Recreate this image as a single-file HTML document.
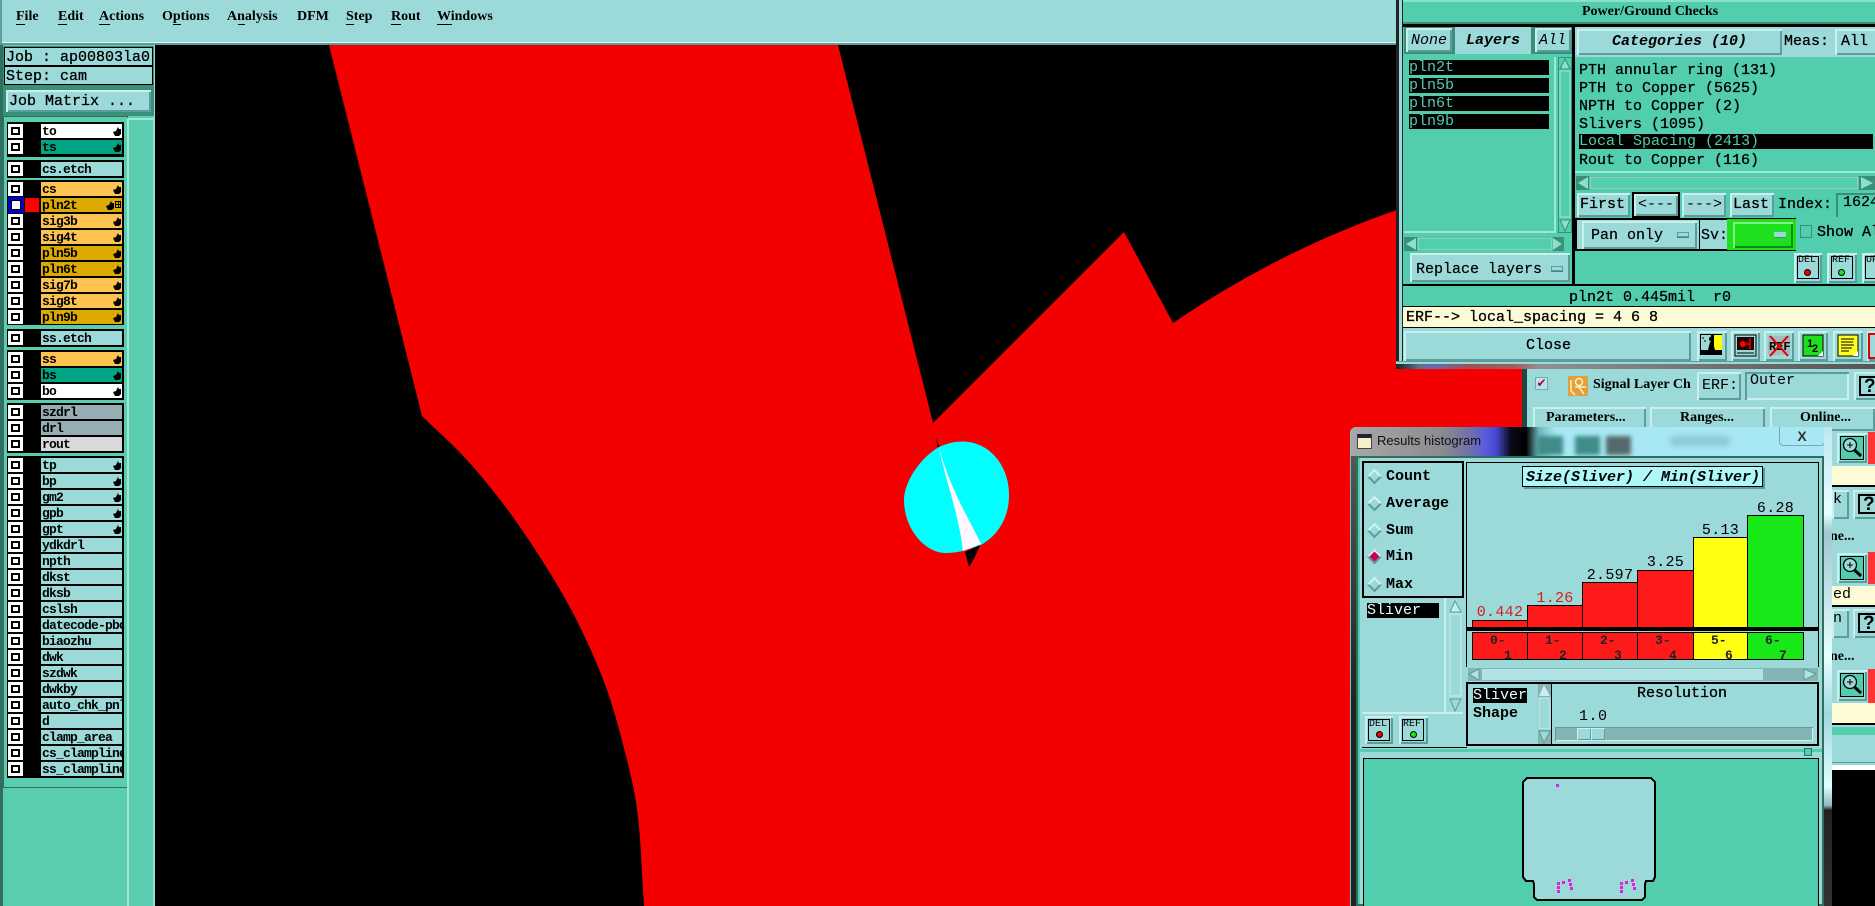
<!DOCTYPE html>
<html><head><meta charset="utf-8"><title>Genesis</title>
<style>
html,body{margin:0;padding:0;width:1875px;height:906px;overflow:hidden;background:#000}
*,*:after{box-sizing:border-box}
div,span{position:absolute}
.m{font:15px/16px "Liberation Mono",monospace;white-space:pre;color:#000}
.mb{font:bold 15px/16px "Liberation Mono",monospace;white-space:pre;color:#000}
.s{font:bold 14px/16px "Liberation Serif",serif;white-space:pre;color:#000}
.b{background:#9cd9d9;box-shadow:inset 2px 2px 0 #c9f0ee,inset -2px -2px 0 #5c9c9b}
.g{background:#000}
.r{left:8px;width:114px;height:14px}
.c{left:0;top:0;width:15px;height:14px;background:#fff}
.c:after{content:"";position:absolute;left:3px;top:3px;width:9px;height:8px;border:2px solid #000;background:#fff}
.l{left:33px;top:0;width:81px;height:14px;font:bold 13px/15px "Liberation Mono",monospace;letter-spacing:-.8px;color:#000;overflow:hidden;padding-left:1px;white-space:pre;background:#9cd9d9}
.y{background:#fdc350}.o{background:#dcaa00}.w{background:#fff}.e{background:#00a583}.k{background:#94aeb4}
svg{position:absolute}
.d{width:11px;height:11px;transform:rotate(45deg);background:#9cd9d9;border:2px solid;border-color:#d2f2ee #5c9c9b #5c9c9b #d2f2ee}
.bar{border:1px solid #000}
.cell{top:632px;height:28px;border:1px solid #000;overflow:hidden}
.cell span{font:bold 13px/14px "Liberation Mono",monospace;color:#222}
.lab{font:15px/16px "Liberation Mono",monospace;color:#000;letter-spacing:.3px;text-align:center;white-space:pre}
</style></head><body>
<svg width="0" height="0" style="position:absolute"><defs>
<symbol id="h" viewBox="0 0 8 9"><path d="M0 5 3 4 5 0 6 2 8 2 8 7 6 9 2 9Z" fill="#000"/></symbol>
<symbol id="z" viewBox="0 0 24 24"><rect x=".5" y=".5" width="23" height="23" fill="#52cdad" stroke="#000"/><circle cx="10" cy="9" r="6.5" fill="#9cd9d9" stroke="#000" stroke-width="1.3"/><path d="M7 9h6M10 6v6" stroke="#000"/><path d="M14.5 14 21 20" stroke="#000" stroke-width="3"/></symbol>
</defs></svg>

<!-- canvas -->
<svg style="left:0;top:0" width="1875" height="906" viewBox="0 0 1875 906">
<rect width="1875" height="906" fill="#000"/>
<path d="M329 45H838L933 423 1124 232 1173 323Q1280 250 1400 209V906H644C642 876 640.800 841.300 638 817C635.200 792.700 632.200 781.200 627 760C621.800 738.800 614.800 712.200 607 690C599.200 667.800 589.500 646.500 580 627C570.500 607.500 561.700 592 550 573C538.300 554 523.800 531.800 510 513C496.200 494.200 481.700 476.200 467 460C452.300 443.800 437 431 422 416Z" fill="#f50000"/>
<path d="M1400 209H1875V906H1400Z" fill="#f50000"/>
<path d="M939 447C948 443 955 441.500 963 441.500C990 442 1009 466 1009 495C1009 518 998 535 981 545L963 551C958 552 952 553 946 553C924 553 904 528 904 500C904 482 920 458 939 447Z" fill="#0ff"/>
<path d="M939 447C950 490 970 520 981 544L963 551C958 510 945 480 939 447Z" fill="#fdf8ff"/>
<path d="M965 552 980 545Q975 558 969 567Z" fill="#000"/>
<path d="M936 438 939.500 447 937.500 447Z" fill="#000"/>
</svg>

<!-- menu -->
<div style="left:0;top:0;width:1400px;height:45px;background:#9cd9d9;border-bottom:2px solid #5c9c9b;box-shadow:inset 2px 0 0 #5c9c9b,inset 0 -1px 0 #e4f8f8"></div>
<div class="s" style="left:16px;top:9px">File</div><div style="left:16px;top:24px;width:9px;height:1px;background:#000"></div>
<div class="s" style="left:58px;top:9px">Edit</div><div style="left:58px;top:24px;width:9px;height:1px;background:#000"></div>
<div class="s" style="left:99px;top:9px">Actions</div><div style="left:99px;top:24px;width:11px;height:1px;background:#000"></div>
<div class="s" style="left:162px;top:9px">Options</div><div style="left:173px;top:24px;width:8px;height:1px;background:#000"></div>
<div class="s" style="left:227px;top:9px">Analysis</div><div style="left:238px;top:24px;width:7px;height:1px;background:#000"></div>
<div class="s" style="left:297px;top:9px">DFM</div>
<div class="s" style="left:346px;top:9px">Step</div><div style="left:346px;top:24px;width:8px;height:1px;background:#000"></div>
<div class="s" style="left:391px;top:9px">Rout</div><div style="left:391px;top:24px;width:10px;height:1px;background:#000"></div>
<div class="s" style="left:437px;top:9px">Windows</div><div style="left:437px;top:24px;width:15px;height:1px;background:#000"></div>

<!-- left panel -->
<div style="left:0;top:45px;width:155px;height:861px;background:#5acdb0;border-right:2px solid #9cd9d9;box-shadow:inset 3px 0 0 #2f6f5f"></div>
<div style="left:3px;top:46px;width:151px;height:70px;background:#3a8f79"></div>
<div style="left:4px;top:47px;width:149px;height:19px;background:#9cd9d9;border:1px solid #000"></div>
<div class="mb" style="left:6px;top:50px;font-weight:normal;-webkit-text-stroke:.3px #000;">Job : ap00803la0</div>
<div style="left:4px;top:66px;width:149px;height:19px;background:#9cd9d9;border:1px solid #000"></div>
<div class="mb" style="left:6px;top:69px;font-weight:normal;-webkit-text-stroke:.3px #000;">Step: cam</div>
<div class="b" style="left:6px;top:90px;width:145px;height:22px"></div>
<div class="mb" style="left:9px;top:94px;font-weight:normal;-webkit-text-stroke:.3px #000;">Job Matrix ...</div>
<div style="left:3px;top:116px;width:125px;height:672px;background:#5acdb0;border:1px solid #2f6f5f"></div>
<div style="left:127px;top:118px;width:26px;height:788px;background:#5acdb0;box-shadow:inset 2px 2px 0 #9fe6d4"></div>

<div class="g" style="left:7px;top:122px;width:117px;height:35px"></div>
<div class="r" style="top:124px"><div class="c"></div><div class="l w">to<svg style="left:72px;top:3px" width="8" height="9"><use href="#h"/></svg></div></div>
<div class="r" style="top:140px"><div class="c"></div><div class="l e">ts<svg style="left:72px;top:3px" width="8" height="9"><use href="#h"/></svg></div></div>

<div class="g" style="left:7px;top:160px;width:117px;height:18px"></div>
<div class="r" style="top:162px"><div class="c"></div><div class="l">cs.etch</div></div>

<div class="g" style="left:7px;top:180px;width:117px;height:145px"></div>
<div class="r" style="top:182px"><div class="c"></div><div class="l y">cs<svg style="left:72px;top:3px" width="8" height="9"><use href="#h"/></svg></div></div>
<div style="left:8px;top:197px;width:16px;height:16px;background:#0000c8"></div>
<div style="left:11px;top:200px;width:10px;height:10px;background:#000"></div>
<div style="left:12px;top:201px;width:8px;height:8px;background:#fff"></div>
<div style="left:25px;top:198px;width:14px;height:14px;background:#f00"></div>
<div class="r" style="top:198px"><div class="l o">pln2t<svg style="left:65px;top:3px" width="8" height="9"><use href="#h"/></svg><span style="left:74px;top:3px;width:6px;height:7px;border:1px solid #000;background:linear-gradient(#000,#000) center/100% 1px no-repeat,linear-gradient(#000,#000) center/1px 100% no-repeat"></span></div></div>
<div class="r" style="top:214px"><div class="c"></div><div class="l y">sig3b<svg style="left:72px;top:3px" width="8" height="9"><use href="#h"/></svg></div></div>
<div class="r" style="top:230px"><div class="c"></div><div class="l y">sig4t<svg style="left:72px;top:3px" width="8" height="9"><use href="#h"/></svg></div></div>
<div class="r" style="top:246px"><div class="c"></div><div class="l o">pln5b<svg style="left:72px;top:3px" width="8" height="9"><use href="#h"/></svg></div></div>
<div class="r" style="top:262px"><div class="c"></div><div class="l o">pln6t<svg style="left:72px;top:3px" width="8" height="9"><use href="#h"/></svg></div></div>
<div class="r" style="top:278px"><div class="c"></div><div class="l y">sig7b<svg style="left:72px;top:3px" width="8" height="9"><use href="#h"/></svg></div></div>
<div class="r" style="top:294px"><div class="c"></div><div class="l y">sig8t<svg style="left:72px;top:3px" width="8" height="9"><use href="#h"/></svg></div></div>
<div class="r" style="top:310px"><div class="c"></div><div class="l o">pln9b<svg style="left:72px;top:3px" width="8" height="9"><use href="#h"/></svg></div></div>

<div class="g" style="left:7px;top:329px;width:117px;height:18px"></div>
<div class="r" style="top:331px"><div class="c"></div><div class="l">ss.etch</div></div>

<div class="g" style="left:7px;top:350px;width:117px;height:50px"></div>
<div class="r" style="top:352px"><div class="c"></div><div class="l y">ss<svg style="left:72px;top:3px" width="8" height="9"><use href="#h"/></svg></div></div>
<div class="r" style="top:368px"><div class="c"></div><div class="l e">bs<svg style="left:72px;top:3px" width="8" height="9"><use href="#h"/></svg></div></div>
<div class="r" style="top:384px"><div class="c"></div><div class="l w">bo<svg style="left:72px;top:3px" width="8" height="9"><use href="#h"/></svg></div></div>

<div class="g" style="left:7px;top:403px;width:117px;height:50px"></div>
<div class="r" style="top:405px"><div class="c"></div><div class="l k">szdrl</div></div>
<div class="r" style="top:421px"><div class="c"></div><div class="l k">drl</div></div>
<div class="r" style="top:437px"><div class="c"></div><div class="l" style="background:#d9d9d9">rout</div></div>

<div class="g" style="left:7px;top:456px;width:117px;height:322px"></div>
<div class="r" style="top:458px"><div class="c"></div><div class="l">tp<svg style="left:72px;top:3px" width="8" height="9"><use href="#h"/></svg></div></div>
<div class="r" style="top:474px"><div class="c"></div><div class="l">bp<svg style="left:72px;top:3px" width="8" height="9"><use href="#h"/></svg></div></div>
<div class="r" style="top:490px"><div class="c"></div><div class="l">gm2<svg style="left:72px;top:3px" width="8" height="9"><use href="#h"/></svg></div></div>
<div class="r" style="top:506px"><div class="c"></div><div class="l">gpb<svg style="left:72px;top:3px" width="8" height="9"><use href="#h"/></svg></div></div>
<div class="r" style="top:522px"><div class="c"></div><div class="l">gpt<svg style="left:72px;top:3px" width="8" height="9"><use href="#h"/></svg></div></div>
<div class="r" style="top:538px"><div class="c"></div><div class="l">ydkdrl</div></div>
<div class="r" style="top:554px"><div class="c"></div><div class="l">npth</div></div>
<div class="r" style="top:570px"><div class="c"></div><div class="l">dkst</div></div>
<div class="r" style="top:586px"><div class="c"></div><div class="l">dksb</div></div>
<div class="r" style="top:602px"><div class="c"></div><div class="l">cslsh</div></div>
<div class="r" style="top:618px"><div class="c"></div><div class="l">datecode-pbo</div></div>
<div class="r" style="top:634px"><div class="c"></div><div class="l">biaozhu</div></div>
<div class="r" style="top:650px"><div class="c"></div><div class="l">dwk</div></div>
<div class="r" style="top:666px"><div class="c"></div><div class="l">szdwk</div></div>
<div class="r" style="top:682px"><div class="c"></div><div class="l">dwkby</div></div>
<div class="r" style="top:698px"><div class="c"></div><div class="l">auto_chk_pnl</div></div>
<div class="r" style="top:714px"><div class="c"></div><div class="l">d</div></div>
<div class="r" style="top:730px"><div class="c"></div><div class="l">clamp_area</div></div>
<div class="r" style="top:746px"><div class="c"></div><div class="l">cs_clampline</div></div>
<div class="r" style="top:762px"><div class="c"></div><div class="l">ss_clampline</div></div>

<!-- signal layer panel behind -->
<div style="left:1522px;top:368px;width:353px;height:402px;background:#9cd9d9;border-left:5px solid #1d4a42"></div>
<div style="left:1535px;top:377px;width:13px;height:13px;background:#b8e6e6;border:1px solid #6fb0ae;color:#b00050;font:bold 12px/11px 'DejaVu Sans',sans-serif;text-align:center">✔</div>
<svg style="left:1568px;top:376px" width="20" height="20"><rect width="20" height="20" fill="#e0a040"/><circle cx="11" cy="6" r="3.500" fill="none" stroke="#fff3c0" stroke-width="1.500"/><path d="M3 4V15L7 19M7 11H18M11 11 16 18" stroke="#fff3c0" stroke-width="1.500" fill="none"/></svg>
<div class="s" style="left:1593px;top:377px">Signal Layer Ch</div>
<div class="b" style="left:1697px;top:372px;width:44px;height:28px"></div><div class="m" style="left:1702px;top:378px">ERF:</div>
<div style="left:1745px;top:372px;width:104px;height:28px;background:#9cd9d9;box-shadow:inset 2px 2px 0 #5c9c9b,inset -2px -2px 0 #c9f0ee"></div><div class="m" style="left:1750px;top:373px">Outer</div>
<div class="b" style="left:1854px;top:372px;width:30px;height:28px"></div>
<div style="left:1859px;top:376px;width:24px;height:20px;border:2px solid #000;font:bold 19px/17px 'Liberation Sans',sans-serif;padding-left:3px">?</div>
<div class="b" style="left:1533px;top:407px;width:113px;height:24px"></div><div class="s" style="left:1546px;top:410px">Parameters...</div>
<div class="b" style="left:1650px;top:407px;width:115px;height:24px"></div><div class="s" style="left:1680px;top:410px">Ranges...</div>
<div class="b" style="left:1770px;top:407px;width:105px;height:24px"></div><div class="s" style="left:1800px;top:410px">Online...</div>
<!-- right fragments -->
<div class="b" style="left:1837px;top:433px;width:30px;height:30px"></div><svg style="left:1840px;top:436px" width="24" height="24"><use href="#z"/></svg>
<div style="left:1868px;top:432px;width:7px;height:32px;background:#f33"></div>
<div style="left:1832px;top:466px;width:43px;height:21px;background:#fdfbd6;border-bottom:2px solid #000"></div>
<div class="b" style="left:1832px;top:490px;width:17px;height:29px"></div><div class="m" style="left:1833px;top:492px">k</div>
<div class="b" style="left:1853px;top:490px;width:30px;height:29px"></div><div style="left:1858px;top:494px;width:22px;height:20px;border:2px solid #000;font:bold 19px/17px 'Liberation Sans',sans-serif;padding-left:3px">?</div>
<div class="s" style="left:1830px;top:529px">ne...</div>
<div class="b" style="left:1837px;top:553px;width:30px;height:30px"></div><svg style="left:1840px;top:556px" width="24" height="24"><use href="#z"/></svg>
<div style="left:1868px;top:552px;width:7px;height:32px;background:#f33"></div>
<div style="left:1832px;top:586px;width:43px;height:21px;background:#fdfbd6;border-bottom:2px solid #000"></div><div class="m" style="left:1833px;top:587px">ed</div>
<div class="b" style="left:1832px;top:609px;width:17px;height:29px"></div><div class="m" style="left:1833px;top:611px">n</div>
<div class="b" style="left:1853px;top:609px;width:30px;height:29px"></div><div style="left:1858px;top:613px;width:22px;height:20px;border:2px solid #000;font:bold 19px/17px 'Liberation Sans',sans-serif;padding-left:3px">?</div>
<div class="s" style="left:1830px;top:649px">ne...</div>
<div class="b" style="left:1837px;top:670px;width:30px;height:31px"></div><svg style="left:1840px;top:673px" width="24" height="24"><use href="#z"/></svg>
<div style="left:1868px;top:669px;width:7px;height:34px;background:#f33"></div>
<div style="left:1832px;top:703px;width:43px;height:22px;background:#fdfbd6;border-bottom:2px solid #000"></div>
<div style="left:1832px;top:727px;width:43px;height:9px;background:#52cdad;border-bottom:1px solid #9cd9d9"></div>
<div style="left:1832px;top:736px;width:43px;height:27px;background:#9cd9d9;border-bottom:1px solid #5c9c9b"></div>
<div style="left:1832px;top:765px;width:43px;height:5px;background:#fff"></div>
<div style="left:1832px;top:770px;width:43px;height:136px;background:#000"></div>

<!-- top dialog -->
<div style="left:1396px;top:0;width:479px;height:369px;background:#52cdad;border-left:3px solid #222;box-shadow:inset 3px 0 0 #9cd9d9,inset 4px 0 0 #222"></div>
<div style="left:1403px;top:0;width:472px;height:24px;background:#52cdad;box-shadow:inset 0 2px 0 #8be0ca,inset 0 -2px 0 #3a8f79"></div>
<div class="s" style="left:1582px;top:4px">Power/Ground Checks</div>
<div class="g" style="left:1403px;top:24px;width:472px;height:3px"></div>
<!-- layers header -->
<div style="left:1404px;top:27px;width:168px;height:27px;background:#3a8f79"></div>
<div class="b" style="left:1406px;top:28px;width:46px;height:24px"></div><div class="m" style="left:1411px;top:33px;font-style:italic">None</div>
<div style="left:1455px;top:27px;width:76px;height:27px;background:#9cd9d9"></div><div class="mb" style="left:1466px;top:33px;font-style:italic">Layers</div>
<div class="b" style="left:1535px;top:28px;width:36px;height:24px"></div><div class="m" style="left:1539px;top:33px;font-style:italic">All</div>
<!-- layer list -->
<div style="left:1404px;top:57px;width:152px;height:176px;background:#52cdad;box-shadow:inset -2px -2px 0 #9fe6d4"></div>
<div class="g" style="left:1409px;top:60px;width:140px;height:15px"></div><div class="m" style="left:1409px;top:60px;color:#52cdad">pln2t</div>
<div class="g" style="left:1409px;top:78px;width:140px;height:15px"></div><div class="m" style="left:1409px;top:78px;color:#52cdad">pln5b</div>
<div class="g" style="left:1409px;top:96px;width:140px;height:15px"></div><div class="m" style="left:1409px;top:96px;color:#52cdad">pln6t</div>
<div class="g" style="left:1409px;top:114px;width:140px;height:15px"></div><div class="m" style="left:1409px;top:114px;color:#52cdad">pln9b</div>
<!-- v scroll -->
<div style="left:1558px;top:57px;width:14px;height:176px;background:#52cdad;box-shadow:inset 0 0 0 1px #3a8f79"></div>
<svg style="left:1559px;top:57px" width="12" height="176"><path d="M6 2 11 12H1Z" fill="#8be0ca" stroke="#3a8f79"/><rect x="1" y="14" width="10" height="146" fill="#52cdad" stroke="#9fe6d4"/><path d="M6 174 11 163H1Z" fill="#8be0ca" stroke="#3a8f79"/></svg>
<!-- h scroll -->
<svg style="left:1404px;top:237px" width="160" height="14"><rect width="160" height="14" fill="#3a8f79"/><path d="M2 7 12 1V13Z" fill="#8be0ca"/><rect x="14" y="1" width="134" height="12" fill="#52cdad" stroke="#9fe6d4"/><path d="M158 7 149 1V13Z" fill="#8be0ca"/></svg>
<div class="b" style="left:1410px;top:253px;width:160px;height:29px"></div><div class="m" style="left:1416px;top:262px;-webkit-text-stroke:.2px #000">Replace layers</div>
<div style="left:1551px;top:266px;width:12px;height:5px;background:#9cd9d9;box-shadow:0 1px 0 #3a8f79,inset 0 0 0 1px #5c9c9b"></div>
<div class="g" style="left:1572px;top:27px;width:3px;height:259px"></div>
<!-- right header -->
<div style="left:1575px;top:27px;width:300px;height:30px;background:#9cd9d9"></div>
<div class="b" style="left:1577px;top:29px;width:205px;height:26px"></div><div class="mb" style="left:1612px;top:34px;font-style:italic">Categories (10)</div>
<div class="mb" style="left:1784px;top:34px;font-weight:normal;-webkit-text-stroke:.3px #000">Meas:</div>
<div class="b" style="left:1835px;top:29px;width:45px;height:26px"></div><div class="mb" style="left:1841px;top:34px;font-weight:normal;-webkit-text-stroke:.3px #000">All</div>
<div class="m" style="left:1579px;top:63px;-webkit-text-stroke:.3px #000">PTH annular ring (131)</div>
<div class="m" style="left:1579px;top:81px;-webkit-text-stroke:.3px #000">PTH to Copper (5625)</div>
<div class="m" style="left:1579px;top:99px;-webkit-text-stroke:.3px #000">NPTH to Copper (2)</div>
<div class="m" style="left:1579px;top:117px;-webkit-text-stroke:.3px #000">Slivers (1095)</div>
<div class="g" style="left:1579px;top:134px;width:294px;height:15px"></div><div class="m" style="left:1579px;top:134px;color:#52cdad">Local Spacing (2413)</div>
<div class="m" style="left:1579px;top:153px;-webkit-text-stroke:.3px #000">Rout to Copper (116)</div>
<div style="left:1575px;top:171px;width:300px;height:2px;background:#9fe6d4"></div>
<svg style="left:1576px;top:176px" width="299" height="14"><rect width="299" height="14" fill="#3a8f79"/><path d="M2 7 12 1V13Z" fill="#8be0ca"/><rect x="14" y="1" width="268" height="12" fill="#52cdad" stroke="#9fe6d4"/><path d="M297 7 285 1V13Z" fill="#8be0ca"/></svg>
<!-- nav -->
<div class="b" style="left:1577px;top:193px;width:53px;height:24px"></div><div class="mb" style="left:1580px;top:197px;font-weight:normal;-webkit-text-stroke:.3px #000">First</div>
<div style="left:1632px;top:192px;width:48px;height:26px;background:#000"></div><div class="b" style="left:1634px;top:194px;width:44px;height:22px"></div><div class="m" style="left:1638px;top:197px">&lt;---</div>
<div class="b" style="left:1682px;top:193px;width:44px;height:24px"></div><div class="m" style="left:1686px;top:197px">---&gt;</div>
<div class="b" style="left:1730px;top:193px;width:44px;height:24px"></div><div class="mb" style="left:1733px;top:197px;font-weight:normal;-webkit-text-stroke:.3px #000">Last</div>
<div class="mb" style="left:1778px;top:197px;font-weight:normal;-webkit-text-stroke:.3px #000">Index:</div>
<div style="left:1836px;top:193px;width:39px;height:24px;background:#52cdad;box-shadow:inset 2px 2px 0 #3a8f79"></div><div class="m" style="left:1843px;top:195px;-webkit-text-stroke:.2px #000">1624</div>
<!-- pan row -->
<div style="left:1575px;top:218px;width:221px;height:33px;background:#000"></div>
<div style="left:1577px;top:220px;width:122px;height:29px;background:#9cd9d9"></div>
<div class="b" style="left:1582px;top:221px;width:115px;height:28px"></div><div class="m" style="left:1591px;top:228px;-webkit-text-stroke:.2px #000">Pan only</div>
<div style="left:1677px;top:232px;width:12px;height:5px;background:#9cd9d9;box-shadow:0 1px 0 #3a8f79,inset 0 0 0 1px #5c9c9b"></div>
<div style="left:1700px;top:220px;width:27px;height:29px;background:#9cd9d9"></div><div class="m" style="left:1701px;top:228px;-webkit-text-stroke:.2px #000">Sv:</div>
<div style="left:1727px;top:219px;width:69px;height:31px;background:#1fe01f"></div>
<div style="left:1733px;top:222px;width:60px;height:26px;background:#1fe01f;box-shadow:inset 2px 2px 0 #80f080,inset -2px -2px 0 #108a10"></div>
<div style="left:1774px;top:232px;width:12px;height:5px;background:#9cd9d9;box-shadow:0 1px 0 #3a8f79"></div>
<div style="left:1800px;top:225px;width:12px;height:13px;background:#52cdad;border:1px solid #3a8f79"></div>
<div class="mb" style="left:1817px;top:225px;font-weight:normal;-webkit-text-stroke:.3px #000">Show Al</div>
<!-- del/ref -->
<div class="b" style="left:1794px;top:253px;width:28px;height:30px"></div>
<div style="left:1797px;top:256px;width:22px;height:23px;border:1px solid #000"></div><div class="m" style="left:1798px;top:255px;font-size:10px;line-height:12px">DEL</div><div style="left:1804px;top:269px;width:7px;height:7px;border-radius:50%;background:#e00;border:1px solid #000"></div>
<div class="b" style="left:1827px;top:253px;width:30px;height:30px"></div>
<div style="left:1831px;top:256px;width:22px;height:23px;border:1px solid #000"></div><div class="m" style="left:1832px;top:255px;font-size:10px;line-height:12px">REF</div><div style="left:1838px;top:269px;width:7px;height:7px;border-radius:50%;background:#1e1;border:1px solid #000"></div>
<div class="b" style="left:1862px;top:253px;width:20px;height:30px"></div>
<div style="left:1865px;top:256px;width:14px;height:23px;border:1px solid #000"></div><div class="m" style="left:1866px;top:255px;font-size:10px;line-height:12px">UP</div>
<!-- status -->
<div class="g" style="left:1403px;top:284px;width:472px;height:2px"></div>
<div class="m" style="left:1569px;top:290px;-webkit-text-stroke:.3px #000">pln2t 0.445mil  r0</div>
<div class="g" style="left:1403px;top:306px;width:472px;height:1px"></div>
<div style="left:1403px;top:307px;width:472px;height:20px;background:#fdfbd6"></div>
<div class="m" style="left:1406px;top:310px;-webkit-text-stroke:.3px #000">ERF--&gt; local_spacing = 4 6 8</div>
<div class="g" style="left:1403px;top:327px;width:472px;height:1px"></div>
<div style="left:1403px;top:328px;width:472px;height:33px;background:#9cd9d9"></div>
<div class="b" style="left:1404px;top:331px;width:287px;height:30px"></div><div class="m" style="left:1526px;top:338px;-webkit-text-stroke:.3px #000">Close</div>
<div class="b" style="left:1697px;top:331px;width:30px;height:30px"></div>
<svg style="left:1700px;top:334px" width="24" height="24"><rect width="22" height="21" fill="#000"/><rect x="1" y="1" width="10" height="15" fill="#9cd9d9"/><rect x="14" y="1" width="8" height="15" fill="#ff0"/><circle cx="11.500" cy="5" r="2.500" fill="#000"/><path d="M8 16 10 8H13L15 16Z" fill="#000"/><path d="M3 3v2M5 6v2" stroke="#000"/></svg>
<div class="b" style="left:1731px;top:331px;width:29px;height:30px"></div>
<svg style="left:1734px;top:334px" width="24" height="24"><rect x="1" y="1" width="21" height="21" fill="#9cd9d9" stroke="#000"/><rect x="3" y="3" width="17" height="13" fill="#200"/><circle cx="9" cy="10" r="3" fill="#f00"/><path d="M16 4V15M10 10H16" stroke="#e00" stroke-width="1.500"/><path d="M3 19H20" stroke="#000"/></svg>
<div class="b" style="left:1764px;top:331px;width:30px;height:30px"></div>
<svg style="left:1767px;top:334px" width="24" height="24"><rect x="1" y="2" width="22" height="19" fill="#a8b8c0"/><text x="2" y="16" font-family="Liberation Mono" font-size="12" font-weight="bold" fill="#000">REF</text><path d="M3 2 21 22M21 2 3 22" stroke="#d00" stroke-width="2"/></svg>
<div class="b" style="left:1798px;top:331px;width:30px;height:30px"></div>
<svg style="left:1801px;top:334px" width="24" height="24"><rect x="2" y="1" width="20" height="21" fill="#1fe01f" stroke="#000"/><text x="6" y="13" font-family="Liberation Sans" font-size="11" font-weight="bold" fill="#000">1</text><text x="11" y="18" font-family="Liberation Sans" font-size="11" font-weight="bold" fill="#000">2</text><path d="M17 22 22 17V22Z" fill="#fff"/></svg>
<div class="b" style="left:1833px;top:331px;width:30px;height:30px"></div>
<svg style="left:1836px;top:334px" width="24" height="24"><rect x="2" y="1" width="20" height="21" fill="#ffff20" stroke="#000"/><path d="M5 5H18M5 8H17M5 11H18M5 14H16M5 17H13" stroke="#000"/><path d="M17 22 22 17V22Z" fill="#fff"/></svg>
<div class="b" style="left:1867px;top:331px;width:14px;height:30px"></div>
<div style="left:1868px;top:333px;width:7px;height:26px;background:#9cd9d9;border:2px solid #d00;border-right:none"></div>
<div style="left:1396px;top:361px;width:479px;height:4px;background:#9cd9d9;box-shadow:inset 0 1px 0 #5c9c9b"></div>
<div style="left:1396px;top:364px;width:479px;height:5px;background:linear-gradient(90deg,#222 0,#607090 5%,#6a6ab0 8%,#a05050 15%,#a06060 25%,#909090 30%,#555 100%)"></div>

<!-- histogram -->
<div style="left:1350px;top:427px;width:482px;height:479px;background:#7fc0c8;border-radius:6px 6px 0 0"></div>
<div style="left:1351px;top:427px;width:481px;height:29px;border-radius:6px 6px 0 0;background:linear-gradient(90deg,#a8a8a8 0,#8c8c90 90px,#7272a8 118px,#5a5ae0 135px,#4848d0 145px,#0a0a18 160px,#000 175px,#6fb8c0 188px,#a8e8f4 205px,#a8e8f4 481px)"></div>
<div style="left:1537px;top:436px;width:26px;height:19px;background:#3f8c88;filter:blur(2px)"></div>
<div style="left:1575px;top:436px;width:25px;height:19px;background:#3f8c88;filter:blur(2px)"></div>
<div style="left:1606px;top:436px;width:25px;height:19px;background:#556b6b;filter:blur(2px)"></div>
<div style="left:1670px;top:436px;width:60px;height:10px;background:#8cc8d4;filter:blur(3px)"></div>
<div style="left:1357px;top:434px;width:15px;height:15px;background:#f4f0c8;border:1px solid #444;border-top:4px solid #223"></div>
<div style="left:1377px;top:433px;font:13px/16px 'Liberation Sans',sans-serif;color:#111;white-space:pre">Results histogram</div>
<div style="left:1779px;top:427px;width:46px;height:19px;border:1px solid #7aa8b0;border-top:none;border-radius:0 0 4px 4px;background:#a8e8f4;font:bold 14px/18px 'Liberation Sans',sans-serif;text-align:center;color:#333">X</div>
<div style="left:1356px;top:456px;width:468px;height:450px;background:#9cd9d9;border:2px solid #2f6f5f;box-shadow:inset 2px 0 0 #52cdad"></div>
<div style="left:1824px;top:427px;width:8px;height:479px;background:linear-gradient(#bde8f0 0,#e8ffff 18%,#a0c8d0 22%,#e8ffff 48%,#a0d8e0 60%,#e0ffff 75%,#8fb8c0 79%,#222 80%,#333 100%)"></div>
<div style="left:1351px;top:700px;width:5px;height:206px;background:#222"></div>
<div style="left:1351px;top:456px;width:5px;height:244px;background:linear-gradient(#555,#222)"></div>
<!-- radio box -->
<div style="left:1362px;top:461px;width:102px;height:137px;border:2px solid #000"></div>
<div class="d" style="left:1369px;top:471px"></div><div class="mb" style="left:1386px;top:469px">Count</div>
<div class="d" style="left:1369px;top:498px"></div><div class="mb" style="left:1386px;top:496px">Average</div>
<div class="d" style="left:1369px;top:525px"></div><div class="mb" style="left:1386px;top:523px">Sum</div>
<div class="d" style="left:1369px;top:551px;background:#c80050"></div><div class="mb" style="left:1386px;top:549px">Min</div>
<div class="d" style="left:1369px;top:579px"></div><div class="mb" style="left:1386px;top:577px">Max</div>
<div class="g" style="left:1367px;top:603px;width:72px;height:15px"></div><div class="m" style="left:1367px;top:603px;color:#e8ffff">Sliver</div>
<div style="left:1444px;top:598px;width:2px;height:114px;background:#c9f0ee"></div>
<svg style="left:1449px;top:600px" width="13" height="112"><path d="M6 1 12 12H1Z" fill="#c9f0ee" stroke="#5c9c9b"/><rect x="1" y="14" width="11" height="82" fill="#9cd9d9" stroke="#c9f0ee"/><path d="M6 111 12 99H1Z" fill="#9cd9d9" stroke="#5c9c9b"/></svg>
<div style="left:1362px;top:712px;width:101px;height:2px;background:#c9f0ee"></div>
<div class="b" style="left:1365px;top:716px;width:28px;height:28px"></div><div style="left:1368px;top:719px;width:22px;height:22px;border:1px solid #000"></div><div class="m" style="left:1369px;top:719px;font-size:10px;line-height:12px">DEL</div><div style="left:1376px;top:731px;width:7px;height:7px;border-radius:50%;background:#e00;border:1px solid #000"></div>
<div class="b" style="left:1399px;top:716px;width:29px;height:28px"></div><div style="left:1402px;top:719px;width:22px;height:22px;border:1px solid #000"></div><div class="m" style="left:1403px;top:719px;font-size:10px;line-height:12px">REF</div><div style="left:1410px;top:731px;width:7px;height:7px;border-radius:50%;background:#1e1;border:1px solid #000"></div>
<div style="left:1362px;top:747px;width:105px;height:1px;background:#000"></div>
<!-- chart -->
<div style="left:1466px;top:462px;width:353px;height:205px;border:1px solid #000;border-bottom:none"></div>
<div style="left:1522px;top:466px;width:241px;height:21px;background:#b0f8f8;border:1px solid #000;box-shadow:2px 2px 0 #5c9c9b"></div>
<div class="mb" style="left:1526px;top:470px;font-style:italic">Size(Sliver) / Min(Sliver)</div>
<div class="bar" style="left:1472px;top:620px;width:56px;height:8px;background:#ff1a1a"></div>
<div class="bar" style="left:1527px;top:605px;width:56px;height:23px;background:#ff1a1a"></div>
<div class="bar" style="left:1582px;top:582px;width:56px;height:46px;background:#ff1a1a"></div>
<div class="bar" style="left:1637px;top:570px;width:57px;height:58px;background:#ff1a1a"></div>
<div class="bar" style="left:1693px;top:537px;width:55px;height:91px;background:#ffff14"></div>
<div class="bar" style="left:1747px;top:515px;width:57px;height:113px;background:#18e818"></div>
<div class="g" style="left:1467px;top:627px;width:351px;height:4px"></div>
<div class="lab" style="left:1472px;top:605px;width:56px;color:#e01818">0.442</div>
<div class="lab" style="left:1527px;top:591px;width:56px;color:#e01818">1.26</div>
<div class="lab" style="left:1582px;top:568px;width:56px">2.597</div>
<div class="lab" style="left:1637px;top:555px;width:57px">3.25</div>
<div class="lab" style="left:1693px;top:523px;width:55px">5.13</div>
<div class="lab" style="left:1747px;top:501px;width:57px">6.28</div>
<div class="cell" style="left:1472px;width:56px;background:#ff1a1a"><span style="left:17px;top:1px">0-</span><span style="left:31px;top:16px">1</span></div>
<div class="cell" style="left:1527px;width:56px;background:#ff1a1a"><span style="left:17px;top:1px">1-</span><span style="left:31px;top:16px">2</span></div>
<div class="cell" style="left:1582px;width:56px;background:#ff1a1a"><span style="left:17px;top:1px">2-</span><span style="left:31px;top:16px">3</span></div>
<div class="cell" style="left:1637px;width:57px;background:#ff1a1a"><span style="left:17px;top:1px">3-</span><span style="left:31px;top:16px">4</span></div>
<div class="cell" style="left:1693px;width:55px;background:#ffff14"><span style="left:17px;top:1px">5-</span><span style="left:31px;top:16px">6</span></div>
<div class="cell" style="left:1747px;width:57px;background:#18e818"><span style="left:17px;top:1px">6-</span><span style="left:31px;top:16px">7</span></div>
<!-- h scroll chart -->
<svg style="left:1468px;top:668px" width="350" height="13"><rect width="350" height="13" fill="#84b4b4"/><path d="M1 6 11 1V12Z" fill="#b0e4e4" stroke="#5c9c9b"/><rect x="14" y="1" width="281" height="11" fill="#b0e4e4"/><path d="M348 6 336 1V12Z" fill="#b0e4e4" stroke="#5c9c9b"/></svg>
<!-- bottom box -->
<div style="left:1466px;top:682px;width:353px;height:64px;border:2px solid #000"></div>
<div class="g" style="left:1473px;top:688px;width:54px;height:15px"></div><div class="m" style="left:1473px;top:688px;color:#e8ffff">Sliver</div>
<div class="mb" style="left:1473px;top:706px">Shape</div>
<svg style="left:1538px;top:684px" width="13" height="60"><rect width="13" height="60" fill="#84b4b4"/><path d="M6 1 12 12H1Z" fill="#c9f0ee"/><rect x="1" y="14" width="11" height="31" fill="#9cd9d9" stroke="#c9f0ee"/><path d="M6 59 12 47H1Z" fill="#9cd9d9" stroke="#5c9c9b"/></svg>
<div class="g" style="left:1551px;top:684px;width:1px;height:60px"></div>
<div class="m" style="left:1637px;top:686px;-webkit-text-stroke:.3px #000">Resolution</div>
<div class="m" style="left:1579px;top:709px;letter-spacing:.5px">1.0</div>
<div style="left:1555px;top:727px;width:258px;height:14px;background:#84b4b4;box-shadow:inset 1px 1px 0 #5c9c9b,inset -1px -1px 0 #c9f0ee"></div>
<div class="b" style="left:1577px;top:728px;width:14px;height:12px;box-shadow:inset 1px 1px 0 #c9f0ee,inset -1px -1px 0 #5c9c9b"></div>
<div class="b" style="left:1591px;top:728px;width:14px;height:12px;box-shadow:inset 1px 1px 0 #c9f0ee,inset -1px -1px 0 #5c9c9b"></div>
<!-- lower map -->
<div style="left:1358px;top:749px;width:464px;height:3px;background:#52cdad"></div>
<div style="left:1804px;top:748px;width:8px;height:8px;background:#52cdad;border:1px solid #2f6f5f"></div>
<div style="left:1363px;top:758px;width:456px;height:148px;background:#52cdad;border:1px solid #000;border-bottom:none"></div>
<svg style="left:1520px;top:774px" width="140" height="130">
<path d="M7 4H131L135 8V103L133 107H126L125 110V123L122 126H17L14 123V110L13 107H6L3 103V8Z" fill="#9cd9d9" stroke="#000" stroke-width="2"/>
<g fill="#e020e0"><rect x="36" y="10" width="3" height="3"/><rect x="37" y="108" width="3" height="3"/><rect x="37" y="112" width="3" height="3"/><rect x="37" y="116" width="3" height="3"/><rect x="42" y="107" width="3" height="3"/><rect x="48" y="105" width="3" height="3"/><rect x="49" y="109" width="3" height="3"/><rect x="50" y="113" width="3" height="3"/>
<rect x="100" y="108" width="3" height="3"/><rect x="100" y="112" width="3" height="3"/><rect x="100" y="116" width="3" height="3"/><rect x="105" y="107" width="3" height="3"/><rect x="111" y="105" width="3" height="3"/><rect x="112" y="109" width="3" height="3"/><rect x="113" y="113" width="3" height="3"/></g>
</svg>
</body></html>
